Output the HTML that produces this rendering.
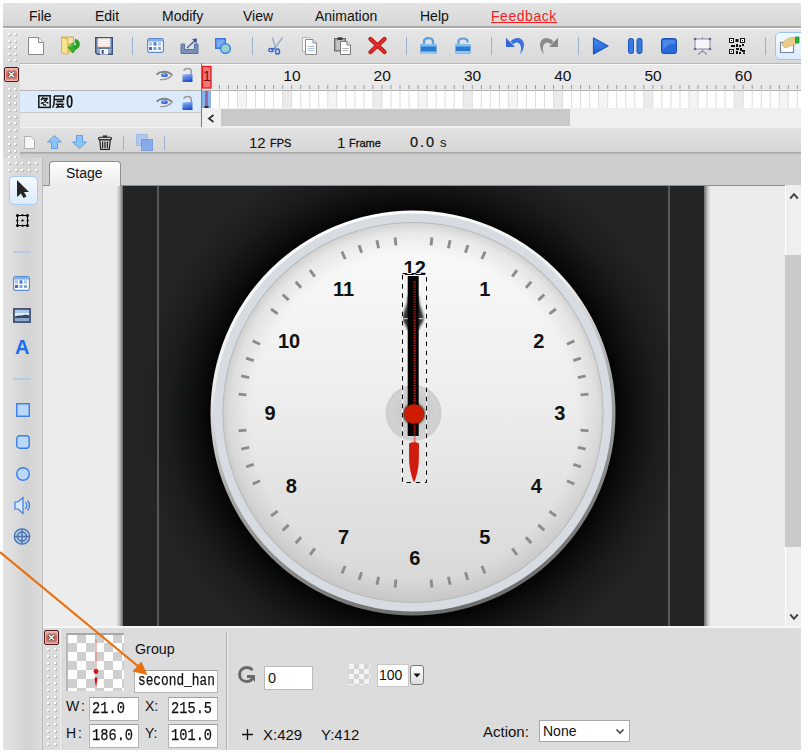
<!DOCTYPE html>
<html><head><meta charset="utf-8">
<style>
*{margin:0;padding:0;box-sizing:border-box}
html,body{width:808px;height:753px;overflow:hidden;background:#fff;font-family:"Liberation Sans",sans-serif;color:#111}
.a{position:absolute}
svg.a{overflow:visible}
.dot{width:2px;height:2px;background:#fdfdfd;box-shadow:1px 1px 0 #b8b8b8}
#menubar{left:3px;top:3px;width:798px;height:25px;background:linear-gradient(#e3e3e3,#d7d7d7);border-bottom:2px solid #aaa}
#menubar span{position:absolute;top:5px;font-size:14px;color:#111}
#toolbar{left:3px;top:29px;width:798px;height:35px;background:linear-gradient(#e6e6e6,#d9d9d9);border-bottom:1px solid #a8a8a8}
#tl{left:20px;top:63px;width:781px;height:90px;background:#e9e9e9}
#tlgrip{left:3px;top:63px;width:17px;height:95px;background:#d9d9d9}
#tabbar{left:20px;top:153px;width:781px;height:33px;background:#cdcdcd;border-top:1px solid #b4b4b4;border-bottom:1px solid #8e8e8e}
#tools{left:3px;top:158px;width:40px;height:592px;background:linear-gradient(90deg,#e4e4e4,#d3d3d3 60%,#dcdcdc);border-right:1px solid #bdbdbd}
#stagebg{left:43px;top:186px;width:758px;height:441px;background:#ececec}
#dark{left:123px;top:186px;width:581px;height:440px;background:#232426;}
#vscroll{left:785px;top:185px;width:16px;height:441px;background:#efefef;border-left:1px solid #fff}
#props{left:43px;top:626px;width:758px;height:124px;background:#dcdcdc;border-top:2px solid #f6f6f6}
.box{position:absolute;background:#fff;border:1px solid #b9b9b9;font-family:"Liberation Mono",monospace;font-size:13px;color:#111}
</style></head><body>
<div id="menubar" class="a">
  <span style="left:26px">File</span>
  <span style="left:92px">Edit</span>
  <span style="left:159px">Modify</span>
  <span style="left:240px">View</span>
  <span style="left:312px">Animation</span>
  <span style="left:417px">Help</span>
  <span style="left:488px;color:#f01e1e;text-decoration:underline;letter-spacing:0.55px">Feedback</span>
</div>
<div id="toolbar" class="a"></div>
<div class="a dot" style="left:8px;top:33px"></div><div class="a dot" style="left:8px;top:40px"></div><div class="a dot" style="left:8px;top:46px"></div><div class="a dot" style="left:8px;top:53px"></div><div class="a dot" style="left:8px;top:59px"></div><div class="a dot" style="left:14px;top:33px"></div><div class="a dot" style="left:14px;top:40px"></div><div class="a dot" style="left:14px;top:46px"></div><div class="a dot" style="left:14px;top:53px"></div><div class="a dot" style="left:14px;top:59px"></div><svg class="a" style="left:28px;top:37px" width="16" height="18" viewBox="0 0 16 18"><path d="M0.5 0.5H10.5L15.5 5.5V17.5H0.5Z" fill="#fff" stroke="#8a8a8a"/><path d="M10.5 0.5V5.5H15.5" fill="#eee" stroke="#8a8a8a"/></svg><svg class="a" style="left:61px;top:36px" width="19" height="19" viewBox="0 0 19 19"><rect x="0.5" y="1" width="12" height="15" fill="#f2c868" stroke="#d4a848" stroke-width="0.9"/><rect x="7" y="2" width="5" height="5" fill="#fbe6a0"/><path d="M0.5 1.5 L6.8 3 L6.8 18.5 L0.5 16.5 Z" fill="#f8e48e" stroke="#d6b050" stroke-width="0.9"/><path d="M13.8 4.6 A3.6 3.6 0 1 1 12.6 11.8" fill="none" stroke="#28a028" stroke-width="4"/><path d="M6.9 11.4 L12 6.6 L14.8 13 L12 17.1 Z" fill="#30b030" stroke="#1e901e" stroke-width="0.6"/><path d="M8.5 11 L11.5 8.5" stroke="#a8e8a0" stroke-width="0.9"/></svg><svg class="a" style="left:95px;top:37px" width="18" height="18" viewBox="0 0 18 18"><path d="M0.75 0.75 H17.25 V17.25 H2.5 L0.75 15.5 Z" fill="#9aaccc" stroke="#3a5580" stroke-width="1.5"/><rect x="3" y="1.2" width="12" height="8.8" fill="#fde0d4"/><path d="M3 3.2H15M3 5.5H15M3 7.8H15" stroke="#fff" stroke-width="0.9"/><rect x="2.5" y="10.5" width="13" height="1.2" fill="#4a6590"/><rect x="5" y="12" width="8" height="5.5" fill="#f6f6f6"/><rect x="6.7" y="13" width="2" height="3.8" fill="#3a5580"/></svg><div class="a" style="left:132px;top:37px;width:1px;height:18px;background:#98b2d0"></div><svg class="a" style="left:147px;top:38px" width="17" height="15" viewBox="0 0 17 15"><rect x="0.6" y="0.6" width="15.8" height="13.8" rx="1.8" fill="#fff" stroke="#5a8ad0" stroke-width="1.2"/><rect x="1" y="1" width="15" height="2.6" fill="#8ab0e0"/><rect x="2" y="4.2" width="3" height="3.5" fill="#a8c8ec"/><rect x="6.5" y="4.2" width="3" height="3.5" fill="#4a80cc"/><rect x="11" y="4.2" width="3" height="3.5" fill="#a8c8ec"/><rect x="2" y="9" width="3" height="3" fill="#3a70c0"/><rect x="6.5" y="9" width="3" height="3" fill="#7aa4dc"/><rect x="11" y="9" width="3" height="3" fill="#7aa4dc"/></svg><svg class="a" style="left:180px;top:38px" width="19" height="16" viewBox="0 0 19 16"><path d="M1 6 H4.5 V11.5 H14.5 V6 H18 V15.5 H1 Z" fill="#7890b8" stroke="#5a72a0"/><path d="M7 10 L15 2.5" stroke="#4a5a9a" stroke-width="1.2"/><path d="M12 1 L17 0.5 L16.5 5.5 Z" fill="#3a5090"/></svg><svg class="a" style="left:215px;top:38px" width="16" height="16" viewBox="0 0 16 16"><rect x="0.75" y="0.75" width="9.5" height="9.5" fill="#7aaaf0" stroke="#3a7ae0" stroke-width="1.5"/><circle cx="10.5" cy="10.5" r="4.8" fill="#9ccfc8" stroke="#3a84e8" stroke-width="1.5"/></svg><div class="a" style="left:252px;top:37px;width:1px;height:18px;background:#98b2d0"></div><svg class="a" style="left:268px;top:37px" width="15" height="18" viewBox="0 0 15 18"><path d="M7 11 L14.5 0.5 M7.5 11 L4.5 0.5" stroke="#9ab0c8" stroke-width="1.5"/><path d="M3 12.5 L7.5 11" stroke="#3a64c8" stroke-width="1.6"/><ellipse cx="3" cy="13" rx="2.2" ry="1.6" fill="none" stroke="#3a64c8" stroke-width="1.4"/><ellipse cx="9.5" cy="14.5" rx="2" ry="2.6" fill="none" stroke="#3a64c8" stroke-width="1.5"/></svg><svg class="a" style="left:301px;top:37px" width="17" height="18" viewBox="0 0 17 18"><path d="M1.5 0.5 H8 L10 2.5 V14.5 H1.5 Z" fill="#fafafa" stroke="#b4b4b4"/><path d="M4.5 2.5 H12 L15.5 6 V17.5 H4.5 Z" fill="#fff" stroke="#8a8a8a"/><path d="M12 2.5 V6 H15.5" fill="#eee" stroke="#8a8a8a"/><path d="M6.5 9.5 H13.5 M6.5 11.6 H13.5 M6.5 13.7 H13.5" stroke="#a0b8d0" stroke-width="0.9"/></svg><svg class="a" style="left:334px;top:37px" width="18" height="18" viewBox="0 0 18 18"><rect x="0.5" y="1.5" width="11" height="12.5" fill="#a0a0a0" stroke="#6a6a6a"/><rect x="2.2" y="3.2" width="7.6" height="9.6" fill="#c4c4c4"/><rect x="3.5" y="0.3" width="5" height="2.6" rx="1" fill="#3a3a3a"/><path d="M6.5 4.5 H13 L16.5 8 V17.5 H6.5 Z" fill="#fff" stroke="#7a7a7a"/><path d="M13 4.5 V8 H16.5" fill="#eee" stroke="#7a7a7a"/><path d="M8.5 11.5 H14.5 M8.5 13.6 H14.5" stroke="#a8a8a8" stroke-width="0.9"/></svg><svg class="a" style="left:368px;top:37px" width="19" height="17" viewBox="0 0 19 17"><path d="M2.5 2 L16.5 15 M16.5 2 L2.5 15" stroke="#c01818" stroke-width="4.4" stroke-linecap="round"/><path d="M2.5 2 L16.5 15 M16.5 2 L2.5 15" stroke="#e03030" stroke-width="2" stroke-linecap="round"/></svg><div class="a" style="left:406px;top:37px;width:1px;height:18px;background:#98b2d0"></div><svg class="a" style="left:420px;top:36px" width="17" height="18" viewBox="0 0 17 18"><path d="M4 8 V5.5 C4 1 13 1 13 5.5 V8" fill="none" stroke="#5aa0e0" stroke-width="2.4"/><rect x="0.5" y="8" width="16" height="10" rx="1" fill="#2a7ad0"/><rect x="0.5" y="8" width="16" height="2.5" fill="#80c0f0"/><rect x="0.5" y="15.5" width="16" height="2.5" fill="#90c8f0"/></svg><svg class="a" style="left:455px;top:36px" width="16" height="18" viewBox="0 0 16 18"><path d="M3.5 8 V5.5 C3.5 1.5 12.5 1.5 12.5 5.5 V6.5" fill="none" stroke="#5aa0e0" stroke-width="2.2"/><rect x="0.5" y="8" width="15" height="9.5" rx="1" fill="#2a7ad0"/><rect x="0.5" y="8" width="15" height="2.5" fill="#80c0f0"/><rect x="0.5" y="15" width="15" height="2.5" fill="#90c8f0"/></svg><div class="a" style="left:491px;top:37px;width:1px;height:18px;background:#98b2d0"></div><svg class="a" style="left:505px;top:36px" width="20" height="19" viewBox="0 0 20 19"><path d="M1 1.8 L1 11 L10 11 Z" fill="#3468d8"/><path d="M5.5 5.5 C9 1 17 0 18.8 7 C19.6 11 17.5 15 15 18.5 C16.3 14.5 16.8 10.5 14.5 8 C12.5 5.8 10 6.3 8.5 8.5 Z" fill="#3a72e0"/></svg><svg class="a" style="left:539px;top:36px" width="20" height="19" viewBox="0 0 20 19"><g transform="translate(20 0) scale(-1 1)"><path d="M1 1.8 L1 11 L10 11 Z" fill="#858585"/><path d="M5.5 5.5 C9 1 17 0 18.8 7 C19.6 11 17.5 15 15 18.5 C16.3 14.5 16.8 10.5 14.5 8 C12.5 5.8 10 6.3 8.5 8.5 Z" fill="#8a8a8a"/></g></svg><div class="a" style="left:578px;top:37px;width:1px;height:18px;background:#98b2d0"></div><svg class="a" style="left:592px;top:37px" width="17" height="18" viewBox="0 0 17 18"><defs><linearGradient id="pl" x1="0" y1="0" x2="0" y2="1"><stop offset="0" stop-color="#4a8ef0"/><stop offset="1" stop-color="#1e5ed0"/></linearGradient></defs><path d="M1.5 1 L16 9 L1.5 17 Z" fill="url(#pl)" stroke="#1a58c8" stroke-width="1.2" stroke-linejoin="round"/></svg><svg class="a" style="left:628px;top:38px" width="15" height="16" viewBox="0 0 15 16"><rect x="0.5" y="0.5" width="5" height="15" rx="2" fill="#3a78e0" stroke="#1a58c0"/><rect x="9" y="0.5" width="5" height="15" rx="2" fill="#3a78e0" stroke="#1a58c0"/></svg><svg class="a" style="left:661px;top:38px" width="16" height="16" viewBox="0 0 16 16"><rect x="0.5" y="0.5" width="15" height="15" rx="2" fill="#2a6ad8" stroke="#1a50b0"/><path d="M2 2 H14 V6 C9 5 5 8 2 12 Z" fill="#5a96f0" opacity="0.7"/></svg><svg class="a" style="left:693px;top:37px" width="19" height="18" viewBox="0 0 19 18"><rect x="2" y="2" width="15" height="10" fill="#f4f6fa" stroke="#8a8aa8"/><circle cx="2" cy="2" r="1.3" fill="#6a6a88"/><circle cx="17" cy="2" r="1.3" fill="#6a6a88"/><circle cx="2" cy="12" r="1.3" fill="#6a6a88"/><circle cx="17" cy="12" r="1.3" fill="#6a6a88"/><path d="M9.5 0 V2 M9.5 12 V15 M9.5 14 L5 17.5 M9.5 14 L14 17.5" stroke="#8a8aa8" stroke-width="1.1"/></svg><svg class="a" style="left:729px;top:38px" width="16" height="16" viewBox="0 0 16 16"><g fill="#111"><rect x="0" y="0" width="5" height="5"/><rect x="11" y="0" width="5" height="5"/><rect x="0" y="11" width="5" height="5"/></g><g fill="#fff"><rect x="1" y="1" width="3" height="3"/><rect x="12" y="1" width="3" height="3"/><rect x="1" y="12" width="3" height="3"/></g><g fill="#111"><rect x="2" y="2" width="1" height="1"/><rect x="13" y="2" width="1" height="1"/><rect x="2" y="13" width="1" height="1"/><rect x="6.5" y="1" width="3" height="3"/><rect x="2" y="7" width="4" height="2"/><rect x="7" y="6" width="2" height="3"/><rect x="10" y="7" width="2" height="2"/><rect x="13" y="6" width="2" height="2"/><rect x="7" y="10" width="3" height="2"/><rect x="11" y="10" width="2" height="3"/><rect x="13" y="12" width="3" height="2"/><rect x="7" y="13" width="2" height="3"/><rect x="10" y="14" width="2" height="2"/><rect x="14" y="14.5" width="2" height="1.5"/></g></svg><div class="a" style="left:765px;top:37px;width:1px;height:18px;background:#98b2d0"></div><div class="a" style="left:775px;top:32px;width:32px;height:28px;border:1px solid #9cc4f0;border-radius:5px;background:linear-gradient(#f4f9ff,#dcecff)"></div><svg class="a" style="left:779px;top:36px" width="22" height="18" viewBox="0 0 22 18"><rect x="1.5" y="6.5" width="13" height="10" fill="#fff" stroke="#7a8aa0" stroke-width="1.2"/><path d="M3 9 C5 3 11 1 16 1.5 L17 8 C13 9 10 11 6 12 Z" fill="#e8cc88" stroke="#c8a860" stroke-width="0.6"/><rect x="16" y="0.5" width="4.5" height="7" rx="1" fill="#28a838"/></svg>
<div id="tlgrip" class="a"></div>
<div id="tl" class="a"></div>
<div class="a" style="left:4px;top:67px;width:15px;height:15px;border:1px solid #4a1a28;border-radius:2px;background:linear-gradient(#f4c4b8,#d06048 50%,#e8a090);box-shadow:inset 0 0 0 1px #f0b4a8"></div><svg class="a" style="left:8px;top:71px" width="7" height="7" viewBox="0 0 7 7"><path d="M1 1 L6 6 M6 1 L1 6" stroke="#3a2a30" stroke-width="2.6" stroke-linecap="round"/><path d="M1 1 L6 6 M6 1 L1 6" stroke="#fff" stroke-width="1.5" stroke-linecap="round"/></svg><div class="a dot" style="left:8px;top:88px"></div><div class="a dot" style="left:14px;top:88px"></div><div class="a dot" style="left:8px;top:95px"></div><div class="a dot" style="left:14px;top:95px"></div><div class="a dot" style="left:8px;top:102px"></div><div class="a dot" style="left:14px;top:102px"></div><div class="a dot" style="left:8px;top:109px"></div><div class="a dot" style="left:14px;top:109px"></div><div class="a dot" style="left:8px;top:116px"></div><div class="a dot" style="left:14px;top:116px"></div><div class="a dot" style="left:8px;top:122px"></div><div class="a dot" style="left:14px;top:122px"></div><div class="a dot" style="left:8px;top:129px"></div><div class="a dot" style="left:14px;top:129px"></div><div class="a dot" style="left:8px;top:136px"></div><div class="a dot" style="left:14px;top:136px"></div><div class="a dot" style="left:8px;top:143px"></div><div class="a dot" style="left:14px;top:143px"></div><div class="a dot" style="left:8px;top:150px"></div><div class="a dot" style="left:14px;top:150px"></div><div class="a dot" style="left:8px;top:156px"></div><div class="a dot" style="left:14px;top:156px"></div><div class="a" style="left:20px;top:63px;width:781px;height:1px;background:#b8b8b8"></div><div class="a" style="left:20px;top:64px;width:781px;height:1px;background:#fafafa"></div><div class="a" style="left:20px;top:90px;width:781px;height:1px;background:#b4b4b4"></div><div class="a" style="left:20px;top:91px;width:181px;height:21px;background:#dcebfb"></div><div class="a" style="left:20px;top:112px;width:181px;height:1px;background:#c9c9c9"></div><svg class="a" style="left:156px;top:70px" width="17" height="11" viewBox="0 0 17 11"><path d="M0.5 4.5 C5 0.8 12 0.8 16.2 5.2" fill="none" stroke="#858585" stroke-width="1.9"/><path d="M4 9.6 C9 10 13 8.5 16.2 5.2" fill="none" stroke="#9a9a9a" stroke-width="1.4"/><ellipse cx="8.5" cy="5.2" rx="3.4" ry="1.9" fill="#3a6ad8"/><ellipse cx="8" cy="4.7" rx="1.6" ry="0.8" fill="#8ab4f4"/></svg><svg class="a" style="left:182px;top:67px" width="11" height="15" viewBox="0 0 11 15"><defs><linearGradient id="lk" x1="0" y1="0" x2="0.3" y2="1"><stop offset="0" stop-color="#b4d0f4"/><stop offset="0.35" stop-color="#6a98e8"/><stop offset="1" stop-color="#2a50d0"/></linearGradient></defs><path d="M1.8 3.8 C2.5 0.8 8.8 0.5 9.2 3.8 V7.5" fill="none" stroke="#9a9a9a" stroke-width="1.5"/><rect x="0.5" y="7" width="10" height="8" fill="url(#lk)"/><rect x="4.5" y="9.5" width="1.6" height="3.5" fill="#6a7aa8" opacity="0.6"/></svg><svg class="a" style="left:156px;top:97px" width="17" height="11" viewBox="0 0 17 11"><path d="M0.5 4.5 C5 0.8 12 0.8 16.2 5.2" fill="none" stroke="#858585" stroke-width="1.9"/><path d="M4 9.6 C9 10 13 8.5 16.2 5.2" fill="none" stroke="#9a9a9a" stroke-width="1.4"/><ellipse cx="8.5" cy="5.2" rx="3.4" ry="1.9" fill="#3a6ad8"/><ellipse cx="8" cy="4.7" rx="1.6" ry="0.8" fill="#8ab4f4"/></svg><svg class="a" style="left:182px;top:95px" width="11" height="15" viewBox="0 0 11 15"><defs><linearGradient id="lk" x1="0" y1="0" x2="0.3" y2="1"><stop offset="0" stop-color="#b4d0f4"/><stop offset="0.35" stop-color="#6a98e8"/><stop offset="1" stop-color="#2a50d0"/></linearGradient></defs><path d="M1.8 3.8 C2.5 0.8 8.8 0.5 9.2 3.8 V7.5" fill="none" stroke="#9a9a9a" stroke-width="1.5"/><rect x="0.5" y="7" width="10" height="8" fill="url(#lk)"/><rect x="4.5" y="9.5" width="1.6" height="3.5" fill="#6a7aa8" opacity="0.6"/></svg><svg class="a" style="left:38px;top:95px" width="13" height="13" viewBox="0 0 13 13"><g fill="none" stroke="#141414" stroke-width="1.5"><rect x="0.8" y="0.8" width="11.4" height="11.6"/><path d="M5.2 2.3 L3 5.2 M4.6 3.4 H9.2 C8 6 5.5 7.8 2.8 8.6 M5.8 4.6 C7.2 6.6 8.6 7.6 10.4 8.2 M5 9.4 L8.2 10.4"/></g></svg><svg class="a" style="left:52px;top:95px" width="13" height="13" viewBox="0 0 13 13"><g fill="none" stroke="#141414" stroke-width="1.5"><path d="M2.2 1 H11.6 V4.6 H2.2 M2.2 1 V6 C2.2 9 1.8 11 0.6 12.6 M4.6 6.6 H11.2 M3.6 9.3 H12.2 M7 9.3 L5 12 L11 11.4 M9.5 10.3 L11.8 12.6"/></g></svg><div class="a" style="left:66px;top:92px;font-size:18px;font-weight:bold;color:#151515;transform:scaleX(0.72);transform-origin:0 0">0</div><div class="a" style="left:201px;top:63px;width:1px;height:64px;background:#7a7a7a"></div><div class="a" style="left:202px;top:91px;width:599px;height:17px;background:#fff"></div><svg class="a" style="left:202px;top:63px;overflow:hidden" width="599" height="64" viewBox="202 63 599 64"><rect x="237.52" y="91" width="9.03" height="17" fill="#f4f4f4"/><rect x="282.67" y="91" width="9.03" height="17" fill="#ebebeb"/><rect x="327.82" y="91" width="9.03" height="17" fill="#f4f4f4"/><rect x="372.97" y="91" width="9.03" height="17" fill="#ebebeb"/><rect x="418.12" y="91" width="9.03" height="17" fill="#f4f4f4"/><rect x="463.27" y="91" width="9.03" height="17" fill="#ebebeb"/><rect x="508.42" y="91" width="9.03" height="17" fill="#f4f4f4"/><rect x="553.57" y="91" width="9.03" height="17" fill="#ebebeb"/><rect x="598.72" y="91" width="9.03" height="17" fill="#f4f4f4"/><rect x="643.87" y="91" width="9.03" height="17" fill="#ebebeb"/><rect x="689.02" y="91" width="9.03" height="17" fill="#f4f4f4"/><rect x="734.17" y="91" width="9.03" height="17" fill="#ebebeb"/><rect x="779.32" y="91" width="9.03" height="17" fill="#f4f4f4"/><path d="M210.40 91V108M219.43 91V108M228.46 91V108M237.49 91V108M246.52 91V108M255.55 91V108M264.58 91V108M273.61 91V108M282.64 91V108M291.67 91V108M300.70 91V108M309.73 91V108M318.76 91V108M327.79 91V108M336.82 91V108M345.85 91V108M354.88 91V108M363.91 91V108M372.94 91V108M381.97 91V108M391.00 91V108M400.03 91V108M409.06 91V108M418.09 91V108M427.12 91V108M436.15 91V108M445.18 91V108M454.21 91V108M463.24 91V108M472.27 91V108M481.30 91V108M490.33 91V108M499.36 91V108M508.39 91V108M517.42 91V108M526.45 91V108M535.48 91V108M544.51 91V108M553.54 91V108M562.57 91V108M571.60 91V108M580.63 91V108M589.66 91V108M598.69 91V108M607.72 91V108M616.75 91V108M625.78 91V108M634.81 91V108M643.84 91V108M652.87 91V108M661.90 91V108M670.93 91V108M679.96 91V108M688.99 91V108M698.02 91V108M707.05 91V108M716.08 91V108M725.11 91V108M734.14 91V108M743.17 91V108M752.20 91V108M761.23 91V108M770.26 91V108M779.29 91V108M788.32 91V108M797.35 91V108" stroke="#dedede" stroke-width="1"/><path d="M219.43 85V89M228.46 85V89M237.49 85V89M246.52 85V89M255.55 85V89M264.58 85V89M273.61 85V89M282.64 85V89M291.67 85V89M300.70 85V89M309.73 85V89M318.76 85V89M327.79 85V89M336.82 85V89M345.85 85V89M354.88 85V89M363.91 85V89M372.94 85V89M381.97 85V89M391.00 85V89M400.03 85V89M409.06 85V89M418.09 85V89M427.12 85V89M436.15 85V89M445.18 85V89M454.21 85V89M463.24 85V89M472.27 85V89M481.30 85V89M490.33 85V89M499.36 85V89M508.39 85V89M517.42 85V89M526.45 85V89M535.48 85V89M544.51 85V89M553.54 85V89M562.57 85V89M571.60 85V89M580.63 85V89M589.66 85V89M598.69 85V89M607.72 85V89M616.75 85V89M625.78 85V89M634.81 85V89M643.84 85V89M652.87 85V89M661.90 85V89M670.93 85V89M679.96 85V89M688.99 85V89M698.02 85V89M707.05 85V89M716.08 85V89M725.11 85V89M734.14 85V89M743.17 85V89M752.20 85V89M761.23 85V89M770.26 85V89M779.29 85V89M788.32 85V89M797.35 85V89" stroke="#9a9a9a" stroke-width="1"/><g font-family="Liberation Sans" font-size="15.5" text-anchor="middle" fill="#111"><text x="291.9" y="81">10</text><text x="382.2" y="81">20</text><text x="472.5" y="81">30</text><text x="562.8" y="81">40</text><text x="653.1" y="81">50</text><text x="743.4" y="81">60</text></g><rect x="202.5" y="66.5" width="8.5" height="21.5" fill="#f07878" stroke="#f01818" stroke-width="1.3"/><text x="206.8" y="81" font-family="Liberation Sans" font-size="14" text-anchor="middle" fill="#6a1010">1</text><rect x="202" y="91" width="9" height="17" fill="#88b2ea"/><rect x="205" y="91" width="3" height="16" fill="#8a6aa8"/><rect x="204.5" y="106" width="4" height="2" fill="#333"/></svg><div class="a" style="left:202px;top:108px;width:599px;height:19px;background:#efefef"></div><div class="a" style="left:221px;top:109px;width:349px;height:17px;background:#c9c9c9"></div><svg class="a" style="left:207px;top:114px" width="8" height="9" viewBox="0 0 8 9"><path d="M6.5 1 L2 4.5 L6.5 8" fill="none" stroke="#333" stroke-width="1.8"/></svg><div class="a" style="left:20px;top:127px;width:781px;height:26px;background:linear-gradient(#e2e2e2,#d6d6d6);border-top:1px solid #f2f2f2;border-bottom:1px solid #a8a8a8"></div><svg class="a" style="left:24px;top:136px" width="11" height="13" viewBox="0 0 11 13"><path d="M0.5 0.5H7L10.5 4V12.5H0.5Z" fill="#f6f6f6" stroke="#b0b0b0"/></svg><svg class="a" style="left:47px;top:135px" width="15" height="14" viewBox="0 0 15 14"><path d="M7.5 0.5 L14.5 7 H10.5 V13.5 H4.5 V7 H0.5 Z" fill="#8cc4f8" stroke="#5aa0ea" stroke-width="1"/></svg><svg class="a" style="left:72px;top:135px" width="15" height="14" viewBox="0 0 15 14"><path d="M7.5 13.5 L14.5 7 H10.5 V0.5 H4.5 V7 H0.5 Z" fill="#8cc4f8" stroke="#5aa0ea" stroke-width="1"/></svg><svg class="a" style="left:98px;top:135px" width="14" height="15" viewBox="0 0 14 15"><rect x="0.6" y="2.2" width="12.8" height="2.6" rx="1" fill="#d8d8d8" stroke="#222" stroke-width="1.1"/><rect x="4.8" y="0.4" width="4.4" height="2" fill="#333"/><path d="M1.8 5 H12.2 L11.3 14.4 H2.7 Z" fill="#e0e0e0" stroke="#1e1e1e" stroke-width="1.2"/><path d="M4.6 6.5V13 M7 6.5V13 M9.4 6.5V13" stroke="#222" stroke-width="1.3"/></svg><div class="a" style="left:123px;top:136px;width:1px;height:14px;background:#98b2d0"></div><svg class="a" style="left:136px;top:134px" width="17" height="17" viewBox="0 0 17 17"><rect x="0.5" y="0.5" width="11" height="11" fill="#b0c8ee" stroke="#a0b8e4"/><rect x="5.5" y="5.5" width="11" height="11" fill="#80a8ec" stroke="#6e98e4" opacity="0.9"/></svg><div class="a" style="left:164px;top:136px;width:1px;height:14px;background:#98b2d0"></div><div class="a" style="left:249px;top:134px;font-family:'Liberation Sans';font-size:15px">12</div><div class="a" style="left:270px;top:137px;font-size:11px;color:#111;-webkit-text-stroke:0.3px #111">FPS</div><div class="a" style="left:337px;top:134px;font-size:15px">1</div><div class="a" style="left:349px;top:137px;font-size:11px;color:#111;-webkit-text-stroke:0.3px #111">Frame</div><div class="a" style="left:410px;top:134px;font-size:14.5px;letter-spacing:1.9px;-webkit-text-stroke:0.2px #111">0.0</div><div class="a" style="left:440px;top:135px;font-size:13px">s</div>
<div id="tabbar" class="a"></div>
<div class="a" style="left:49px;top:161px;width:72px;height:25px;border:1px solid #8e8e8e;border-bottom:none;border-radius:4px 4px 0 0;background:linear-gradient(#ffffff,#ececec)"></div><div class="a" style="left:66px;top:165px;font-size:14px;color:#111">Stage</div>
<div id="tools" class="a"></div>
<div class="a dot" style="left:8px;top:162px"></div><div class="a dot" style="left:8px;top:169px"></div><div class="a dot" style="left:15px;top:162px"></div><div class="a dot" style="left:15px;top:169px"></div><div class="a dot" style="left:21px;top:162px"></div><div class="a dot" style="left:21px;top:169px"></div><div class="a dot" style="left:28px;top:162px"></div><div class="a dot" style="left:28px;top:169px"></div><div class="a dot" style="left:35px;top:162px"></div><div class="a dot" style="left:35px;top:169px"></div><div class="a" style="left:9px;top:176px;width:29px;height:29px;border:1px solid #a6cbf5;border-radius:5px;background:linear-gradient(#f5faff,#dcebfc)"></div><svg class="a" style="left:16px;top:179px" width="14" height="20" viewBox="0 0 14 20"><path d="M1 1 L1 18 L5 14.5 L7.5 19 L10.5 17.5 L8 13 L13 13 Z" fill="#262626"/></svg><svg class="a" style="left:15px;top:213px" width="15" height="15" viewBox="0 0 15 15"><rect x="2.5" y="2.5" width="10" height="10" fill="none" stroke="#000" stroke-width="1"/><g fill="#000"><circle cx="2.5" cy="2.5" r="1.5"/><circle cx="12.5" cy="2.5" r="1.5"/><circle cx="2.5" cy="12.5" r="1.5"/><circle cx="12.5" cy="12.5" r="1.5"/><ellipse cx="7.5" cy="2.3" rx="1.4" ry="1"/><ellipse cx="7.5" cy="12.7" rx="1.4" ry="1"/><ellipse cx="2.3" cy="7.5" rx="1" ry="1.3"/><ellipse cx="12.7" cy="7.5" rx="1" ry="1.3"/><ellipse cx="7.5" cy="7.5" rx="1.3" ry="1"/></g></svg><div class="a" style="left:13px;top:251px;width:18px;height:2px;background:#b8cce0"></div><svg class="a" style="left:13px;top:276px" width="17" height="15" viewBox="0 0 17 15"><rect x="0.6" y="0.6" width="15.8" height="13.8" rx="1.8" fill="#fff" stroke="#5a8ad0" stroke-width="1.2"/><rect x="1" y="1" width="15" height="2.6" fill="#8ab0e0"/><rect x="2" y="4.2" width="3" height="3.5" fill="#a8c8ec"/><rect x="6.5" y="4.2" width="3" height="3.5" fill="#4a80cc"/><rect x="11" y="4.2" width="3" height="3.5" fill="#a8c8ec"/><rect x="2" y="9" width="3" height="3" fill="#3a70c0"/><rect x="6.5" y="9" width="3" height="3" fill="#7aa4dc"/><rect x="11" y="9" width="3" height="3" fill="#7aa4dc"/></svg><svg class="a" style="left:13px;top:308px" width="18" height="15" viewBox="0 0 18 15"><rect x="0.75" y="0.75" width="16.5" height="13.5" fill="#5a6a84" stroke="#4a5670" stroke-width="1.5"/><rect x="2" y="2" width="14" height="11" fill="#e4eefa"/><rect x="2" y="2" width="14" height="3" fill="#a8c8ec"/><path d="M2 8.5 C5 7 8 8 11 7 C13 6.5 15 7 16 7.5 V10 H2 Z" fill="#34465e"/><rect x="2" y="10" width="14" height="3" fill="#88aacc"/></svg><div class="a" style="left:15px;top:336px;font-size:20px;font-weight:bold;color:#1a6ef0">A</div><div class="a" style="left:13px;top:378px;width:18px;height:2px;background:#b8cce0"></div><svg class="a" style="left:16px;top:403px" width="14" height="14" viewBox="0 0 14 14"><rect x="0.75" y="0.75" width="12.5" height="12.5" fill="#b8d8fc" stroke="#3a7ee8" stroke-width="1.4"/></svg><svg class="a" style="left:16px;top:435px" width="14" height="14" viewBox="0 0 14 14"><rect x="0.75" y="0.75" width="12.5" height="12.5" rx="3" fill="#b8d8fc" stroke="#3a7ee8" stroke-width="1.4"/></svg><svg class="a" style="left:16px;top:467px" width="14" height="14" viewBox="0 0 14 14"><circle cx="7" cy="7" r="6.3" fill="#b8d8fc" stroke="#3a7ee8" stroke-width="1.4"/></svg><svg class="a" style="left:14px;top:496px" width="17" height="19" viewBox="0 0 17 19"><path d="M1 6 H4 L9 1.5 V17.5 L4 13 H1 Z" fill="#d8e8fc" stroke="#3a7ee8" stroke-width="1.2"/><path d="M11.5 6 C13 8 13 11 11.5 13 M13.5 4.5 C16 7.5 16 11.5 13.5 14.5" fill="none" stroke="#3a7ee8" stroke-width="1.2"/></svg><svg class="a" style="left:13px;top:528px" width="18" height="17" viewBox="0 0 18 17"><circle cx="9" cy="8.5" r="7.7" fill="#b0c8e4" stroke="#4a72b0" stroke-width="1.3"/><circle cx="9" cy="8.5" r="4.5" fill="none" stroke="#4a72b0" stroke-width="1.3"/><path d="M9 1 V16 M1.5 8.5 H16.5" stroke="#4a72b0" stroke-width="1.3"/></svg>
<div id="stagebg" class="a"></div>
<div class="a" style="left:116px;top:186px;width:7px;height:440px;background:linear-gradient(90deg,rgba(0,0,0,0),rgba(0,0,0,.12) 40%,rgba(0,0,0,.55))"></div><div class="a" style="left:704px;top:186px;width:7px;height:440px;background:linear-gradient(270deg,rgba(0,0,0,0),rgba(0,0,0,.12) 40%,rgba(0,0,0,.55))"></div>
<div id="dark" class="a"></div>
<svg class="a" style="left:123px;top:186px;overflow:hidden" width="581" height="440" viewBox="123 186 581 440">
<defs>
<radialGradient id="shd" cx="413" cy="414" r="272" gradientUnits="userSpaceOnUse">
<stop offset="0.73" stop-color="#000" stop-opacity="0.95"/>
<stop offset="0.8" stop-color="#000" stop-opacity="0.6"/>
<stop offset="0.89" stop-color="#000" stop-opacity="0.25"/>
<stop offset="1" stop-color="#000" stop-opacity="0"/>
</radialGradient>
<linearGradient id="dial" x1="0" y1="0" x2="0" y2="1">
<stop offset="0" stop-color="#fbfbfb"/>
<stop offset="0.5" stop-color="#ececec"/>
<stop offset="1" stop-color="#d6d6d6"/>
</linearGradient>
<linearGradient id="rim" x1="0.35" y1="0" x2="0.65" y2="1">
<stop offset="0" stop-color="#ffffff"/>
<stop offset="0.3" stop-color="#eeeeee"/>
<stop offset="0.55" stop-color="#a8a8a8"/>
<stop offset="1" stop-color="#6a6a6a"/>
</linearGradient>
<radialGradient id="dialedge" cx="414" cy="417" r="194" fx="414" fy="417" gradientUnits="userSpaceOnUse">
<stop offset="0.84" stop-color="#000" stop-opacity="0"/>
<stop offset="0.95" stop-color="#000" stop-opacity="0.07"/>
<stop offset="1" stop-color="#000" stop-opacity="0.16"/>
</radialGradient>
<radialGradient id="hub" cx="0.5" cy="0.5" r="0.5">
<stop offset="0" stop-color="#c4c4c4"/>
<stop offset="0.85" stop-color="#d2d2d2"/>
<stop offset="1" stop-color="#cdcdcd"/>
</radialGradient>
</defs>
<circle cx="413" cy="414" r="272" fill="url(#shd)"/>
<circle cx="413" cy="413" r="202.5" fill="url(#rim)"/>
<circle cx="413" cy="412.5" r="199" fill="#d6dce1"/>
<circle cx="413" cy="412.5" r="190.5" fill="#b9b9b9"/>
<circle cx="413" cy="412.5" r="189.5" fill="url(#dial)"/>
<circle cx="413" cy="412.5" r="189.5" fill="url(#dialedge)"/>
<path d="M431.1 245.4L431.9 237.5M448.4 248.2L450.1 240.3M465.4 252.7L467.9 245.1M481.8 259.0L485.1 251.7M512.2 276.6L517.0 270.1M525.9 287.7L531.3 281.7M538.3 300.1L544.3 294.7M549.4 313.8L555.9 309.0M567.0 344.2L574.3 340.9M573.3 360.6L580.9 358.1M577.8 377.6L585.7 375.9M580.6 394.9L588.5 394.1M580.6 430.1L588.5 430.9M577.8 447.4L585.7 449.1M573.3 464.4L580.9 466.9M567.0 480.8L574.3 484.1M549.4 511.2L555.9 516.0M538.3 524.9L544.3 530.3M525.9 537.3L531.3 543.3M512.2 548.4L517.0 554.9M481.8 566.0L485.1 573.3M465.4 572.3L467.9 579.9M448.4 576.8L450.1 584.7M431.1 579.6L431.9 587.5M395.9 579.6L395.1 587.5M378.6 576.8L376.9 584.7M361.6 572.3L359.1 579.9M345.2 566.0L341.9 573.3M314.8 548.4L310.0 554.9M301.1 537.3L295.7 543.3M288.7 524.9L282.7 530.3M277.6 511.2L271.1 516.0M260.0 480.8L252.7 484.1M253.7 464.4L246.1 466.9M249.2 447.4L241.3 449.1M246.4 430.1L238.5 430.9M246.4 394.9L238.5 394.1M249.2 377.6L241.3 375.9M253.7 360.6L246.1 358.1M260.0 344.2L252.7 340.9M277.6 313.8L271.1 309.0M288.7 300.1L282.7 294.7M301.1 287.7L295.7 281.7M314.8 276.6L310.0 270.1M345.2 259.0L341.9 251.7M361.6 252.7L359.1 245.1M378.6 248.2L376.9 240.3M395.9 245.4L395.1 237.5" stroke="#8c8c8c" stroke-width="2.9" fill="none"/>
<g font-family="Liberation Sans" font-weight="bold" font-size="20" text-anchor="middle" fill="#111"><text x="414.7" y="274.7">12</text><text x="484.7" y="295.7">1</text><text x="538.7" y="347.7">2</text><text x="559.8" y="419.8">3</text><text x="536.4" y="492.5">4</text><text x="484.7" y="544.2">5</text><text x="414.9" y="564.5">6</text><text x="343.5" y="543.8">7</text><text x="291.3" y="492.5">8</text><text x="270.0" y="420.0">9</text><text x="289.0" y="347.9">10</text><text x="343.5" y="295.5">11</text></g>
<circle cx="413.5" cy="413" r="28" fill="url(#hub)"/>
<filter id="bl" x="-50%" y="-50%" width="200%" height="200%"><feGaussianBlur stdDeviation="0.9"/></filter>
<path d="M407.7 296 C407.7 306 403 312 402.8 318.3 C403 323 407 326 407.7 330 L418.7 330 C419.4 326 423.4 323 423.6 318.3 C423.4 312 418.7 306 418.7 296 Z" fill="#333" filter="url(#bl)"/>
<path d="M403.5 318.6 H408 M418.5 318.6 H423" stroke="#c4c4c4" stroke-width="1.2"/>
<path d="M407.7 276 L418.7 276 L418.7 436 L407.7 436 Z" fill="#030303"/>
<path d="M414.6 281 V320" stroke="#7a1414" stroke-width="2.4" stroke-dasharray="1.7 0.8"/>
<path d="M414.6 320 V436" stroke="#a81212" stroke-width="2.4" stroke-dasharray="1.7 0.8"/>
<path d="M414.6 436 V443" stroke="#e07a7a" stroke-width="2"/>
<path d="M409 444 C409 441.8 419 441.8 419 444 L418.8 461 C418.3 471 416 478 414 482.5 C412 478 409.7 471 409.2 461 Z" fill="#d01c0c"/>
<circle cx="414" cy="414" r="10.6" fill="#2a0804" filter="url(#bl)"/>
<circle cx="414" cy="414" r="9.8" fill="#cc1b00"/>
<rect x="402.5" y="273.5" width="24" height="209" fill="none" stroke="#fff" stroke-width="1"/>
<rect x="402.5" y="273.5" width="24" height="209" fill="none" stroke="#000" stroke-width="1" stroke-dasharray="4.6 4.6"/>
</svg>

<div id="vscroll" class="a"></div>
<div class="a" style="left:157px;top:186px;width:2px;height:440px;background:#575859"></div><div class="a" style="left:668px;top:186px;width:2px;height:440px;background:#575859"></div><svg class="a" style="left:789px;top:192px" width="10" height="8" viewBox="0 0 10 8"><path d="M1.2 6.5 L5 2.2 L8.8 6.5" fill="none" stroke="#444" stroke-width="2"/></svg><div class="a" style="left:785px;top:255px;width:16px;height:292px;background:#c9c9c9"></div><svg class="a" style="left:789px;top:613px" width="10" height="8" viewBox="0 0 10 8"><path d="M1.2 1.5 L5 5.8 L8.8 1.5" fill="none" stroke="#444" stroke-width="2"/></svg>
<div id="props" class="a"></div>
<div class="a" style="left:44px;top:630px;width:15px;height:15px;border:1px solid #4a1a28;border-radius:2px;background:linear-gradient(#f4c4b8,#d06048 50%,#e8a090);box-shadow:inset 0 0 0 1px #f0b4a8"></div><svg class="a" style="left:48px;top:634px" width="7" height="7" viewBox="0 0 7 7"><path d="M1 1 L6 6 M6 1 L1 6" stroke="#3a2a30" stroke-width="2.6" stroke-linecap="round"/><path d="M1 1 L6 6 M6 1 L1 6" stroke="#fff" stroke-width="1.5" stroke-linecap="round"/></svg><div class="a dot" style="left:47px;top:648px"></div><div class="a dot" style="left:54px;top:648px"></div><div class="a dot" style="left:47px;top:655px"></div><div class="a dot" style="left:54px;top:655px"></div><div class="a dot" style="left:47px;top:662px"></div><div class="a dot" style="left:54px;top:662px"></div><div class="a dot" style="left:47px;top:668px"></div><div class="a dot" style="left:54px;top:668px"></div><div class="a dot" style="left:47px;top:675px"></div><div class="a dot" style="left:54px;top:675px"></div><div class="a dot" style="left:47px;top:682px"></div><div class="a dot" style="left:54px;top:682px"></div><div class="a dot" style="left:47px;top:689px"></div><div class="a dot" style="left:54px;top:689px"></div><div class="a dot" style="left:47px;top:696px"></div><div class="a dot" style="left:54px;top:696px"></div><div class="a dot" style="left:47px;top:702px"></div><div class="a dot" style="left:54px;top:702px"></div><div class="a dot" style="left:47px;top:709px"></div><div class="a dot" style="left:54px;top:709px"></div><div class="a dot" style="left:47px;top:716px"></div><div class="a dot" style="left:54px;top:716px"></div><div class="a dot" style="left:47px;top:723px"></div><div class="a dot" style="left:54px;top:723px"></div><div class="a dot" style="left:47px;top:730px"></div><div class="a dot" style="left:54px;top:730px"></div><div class="a dot" style="left:47px;top:736px"></div><div class="a dot" style="left:54px;top:736px"></div><div class="a dot" style="left:47px;top:743px"></div><div class="a dot" style="left:54px;top:743px"></div><div class="a" style="left:60px;top:628px;width:741px;height:122px;background:#dcdcdc;border-left:1px solid #f0f0f0"></div><svg class="a" style="overflow:hidden;left:68px;top:634px" width="56" height="57" viewBox="0 0 56 57"><rect width="56" height="57" fill="#fff"/><rect x="9" y="0" width="9" height="9" fill="#cfcfcf"/><rect x="27" y="0" width="9" height="9" fill="#cfcfcf"/><rect x="45" y="0" width="9" height="9" fill="#cfcfcf"/><rect x="0" y="9" width="9" height="9" fill="#cfcfcf"/><rect x="18" y="9" width="9" height="9" fill="#cfcfcf"/><rect x="36" y="9" width="9" height="9" fill="#cfcfcf"/><rect x="54" y="9" width="9" height="9" fill="#cfcfcf"/><rect x="9" y="18" width="9" height="9" fill="#cfcfcf"/><rect x="27" y="18" width="9" height="9" fill="#cfcfcf"/><rect x="45" y="18" width="9" height="9" fill="#cfcfcf"/><rect x="0" y="27" width="9" height="9" fill="#cfcfcf"/><rect x="18" y="27" width="9" height="9" fill="#cfcfcf"/><rect x="36" y="27" width="9" height="9" fill="#cfcfcf"/><rect x="54" y="27" width="9" height="9" fill="#cfcfcf"/><rect x="9" y="36" width="9" height="9" fill="#cfcfcf"/><rect x="27" y="36" width="9" height="9" fill="#cfcfcf"/><rect x="45" y="36" width="9" height="9" fill="#cfcfcf"/><rect x="0" y="45" width="9" height="9" fill="#cfcfcf"/><rect x="18" y="45" width="9" height="9" fill="#cfcfcf"/><rect x="36" y="45" width="9" height="9" fill="#cfcfcf"/><rect x="54" y="45" width="9" height="9" fill="#cfcfcf"/><rect x="9" y="54" width="9" height="9" fill="#cfcfcf"/><rect x="27" y="54" width="9" height="9" fill="#cfcfcf"/><rect x="45" y="54" width="9" height="9" fill="#cfcfcf"/></svg><div class="a" style="left:66px;top:633px;width:58px;height:58px;border-top:2px solid #a8a8a8;border-left:2px solid #b8b8b8"></div><svg class="a" style="left:92px;top:638px" width="8" height="52" viewBox="0 0 8 52"><path d="M4 1 V33" stroke="#e07070" stroke-width="0.9"/><circle cx="4" cy="33.5" r="2.4" fill="#d01818"/><path d="M2.6 41 C2.6 38.5 5.4 38.5 5.4 41 L4 51 Z" fill="#d01818"/></svg><div class="a" style="left:135px;top:641px;font-size:14.3px;color:#111">Group</div><div class="a" style="left:134px;top:670px;width:84px;height:23px;background:#fff;border:1px solid #b4b4b4;border-top-color:#a0a0a0"></div><div class="a" style="left:135px;top:671px;width:82px;height:21px;overflow:hidden"><div style="position:absolute;left:3px;top:1px;font-family:'Liberation Mono';font-size:16px;color:#111;transform:scaleX(0.8);transform-origin:0 0;white-space:nowrap;-webkit-text-stroke:0.25px #111">second_han</div></div><div class="a" style="left:66px;top:698px;font-size:14px;letter-spacing:2px">W:</div><div class="a" style="left:89px;top:697px;width:50px;height:24px;background:#fff;border:1px solid #b4b4b4;border-top-color:#a0a0a0;overflow:hidden"></div><div class="a" style="left:92px;top:699px;font-family:'Liberation Mono';font-size:16.5px;color:#111;transform:scaleX(0.83);transform-origin:0 0;white-space:nowrap;-webkit-text-stroke:0.25px #111">21.0</div><div class="a" style="left:145px;top:698px;font-size:14px">X:</div><div class="a" style="left:168px;top:697px;width:50px;height:24px;background:#fff;border:1px solid #b4b4b4;border-top-color:#a0a0a0;overflow:hidden"></div><div class="a" style="left:171px;top:699px;font-family:'Liberation Mono';font-size:16.5px;color:#111;transform:scaleX(0.83);transform-origin:0 0;white-space:nowrap;-webkit-text-stroke:0.25px #111">215.5</div><div class="a" style="left:66px;top:725px;font-size:14px;letter-spacing:2px">H:</div><div class="a" style="left:89px;top:724px;width:50px;height:24px;background:#fff;border:1px solid #b4b4b4;border-top-color:#a0a0a0;overflow:hidden"></div><div class="a" style="left:92px;top:726px;font-family:'Liberation Mono';font-size:16.5px;color:#111;transform:scaleX(0.83);transform-origin:0 0;white-space:nowrap;-webkit-text-stroke:0.25px #111">186.0</div><div class="a" style="left:145px;top:725px;font-size:14px">Y:</div><div class="a" style="left:168px;top:724px;width:50px;height:24px;background:#fff;border:1px solid #b4b4b4;border-top-color:#a0a0a0;overflow:hidden"></div><div class="a" style="left:171px;top:726px;font-family:'Liberation Mono';font-size:16.5px;color:#111;transform:scaleX(0.83);transform-origin:0 0;white-space:nowrap;-webkit-text-stroke:0.25px #111">101.0</div><div class="a" style="left:226px;top:631px;width:1px;height:119px;background:#b0b0b0;box-shadow:1px 0 0 #f0f0f0"></div><svg class="a" style="left:238px;top:666px" width="18" height="17" viewBox="0 0 18 17"><path d="M14.5 4.2 C13 2 11 1.5 8.8 1.5 C4.5 1.5 1.6 4.6 1.6 8.5 C1.6 12.5 4.5 15.5 8.8 15.5 C12 15.5 14.5 13.5 15 10.5 H9" fill="none" stroke="#6a6a6a" stroke-width="3"/><path d="M11 9 H17 V16 Z" fill="#6a6a6a"/></svg><div class="box" style="left:264px;top:666px;width:49px;height:24px;font-family:'Liberation Sans';font-size:14.5px;padding:3px 0 0 3px">0</div><svg class="a" style="overflow:hidden;left:349px;top:664px" width="21" height="21" viewBox="0 0 21 21"><rect width="21" height="21" fill="#f4f4f4"/><rect x="5" y="0" width="5" height="5" fill="#d4d4d4"/><rect x="15" y="0" width="5" height="5" fill="#d4d4d4"/><rect x="0" y="5" width="5" height="5" fill="#d4d4d4"/><rect x="10" y="5" width="5" height="5" fill="#d4d4d4"/><rect x="20" y="5" width="5" height="5" fill="#d4d4d4"/><rect x="5" y="10" width="5" height="5" fill="#d4d4d4"/><rect x="15" y="10" width="5" height="5" fill="#d4d4d4"/><rect x="0" y="15" width="5" height="5" fill="#d4d4d4"/><rect x="10" y="15" width="5" height="5" fill="#d4d4d4"/><rect x="20" y="15" width="5" height="5" fill="#d4d4d4"/><rect x="5" y="20" width="5" height="5" fill="#d4d4d4"/><rect x="15" y="20" width="5" height="5" fill="#d4d4d4"/></svg><div class="box" style="left:377px;top:664px;width:32px;height:23px;font-family:'Liberation Sans';font-size:14px;padding:2px 0 0 1px;border-color:#c8c8c8">100</div><div class="a" style="left:410px;top:665px;width:14px;height:20px;border:1px solid #777;border-radius:3px;background:linear-gradient(#fff,#ddd)"></div><svg class="a" style="left:413px;top:673px" width="8" height="5" viewBox="0 0 8 5"><path d="M0.5 0.5 H7.5 L4 4.5 Z" fill="#111"/></svg><svg class="a" style="left:242px;top:729px" width="11" height="11" viewBox="0 0 11 11"><path d="M0 5.5 H11 M5.5 0 V11" stroke="#111" stroke-width="1.3"/></svg><div class="a" style="left:263px;top:726px;font-size:15px;color:#111">X:429</div><div class="a" style="left:321px;top:726px;font-size:15px;color:#111">Y:412</div><div class="a" style="left:483px;top:723px;font-size:15px;color:#111">Action:</div><div class="box" style="left:539px;top:720px;width:91px;height:22px;font-family:'Liberation Sans';font-size:14px;padding:2px 0 0 3px;border-color:#a8a8a8">None</div><svg class="a" style="left:615px;top:728px" width="10" height="7" viewBox="0 0 10 7"><path d="M1.5 1.5 L5 5 L8.5 1.5" fill="none" stroke="#444" stroke-width="1.6"/></svg>
<div class="a" style="left:801px;top:0;width:7px;height:753px;background:#fff"></div><div class="a" style="left:0;top:750px;width:808px;height:3px;background:#fff"></div><div class="a" style="left:0;top:0;width:808px;height:3px;background:#fff"></div><div class="a" style="left:0;top:0;width:3px;height:753px;background:#fff"></div>
<svg class="a" style="left:0;top:0" width="808" height="753" viewBox="0 0 808 753"><path d="M0 552 L139 667" stroke="#e8700f" stroke-width="2.2"/><path d="M141.3 661.5 L132.5 671.5 L147.5 675 Z" fill="#e8700f"/></svg>
</body></html>
